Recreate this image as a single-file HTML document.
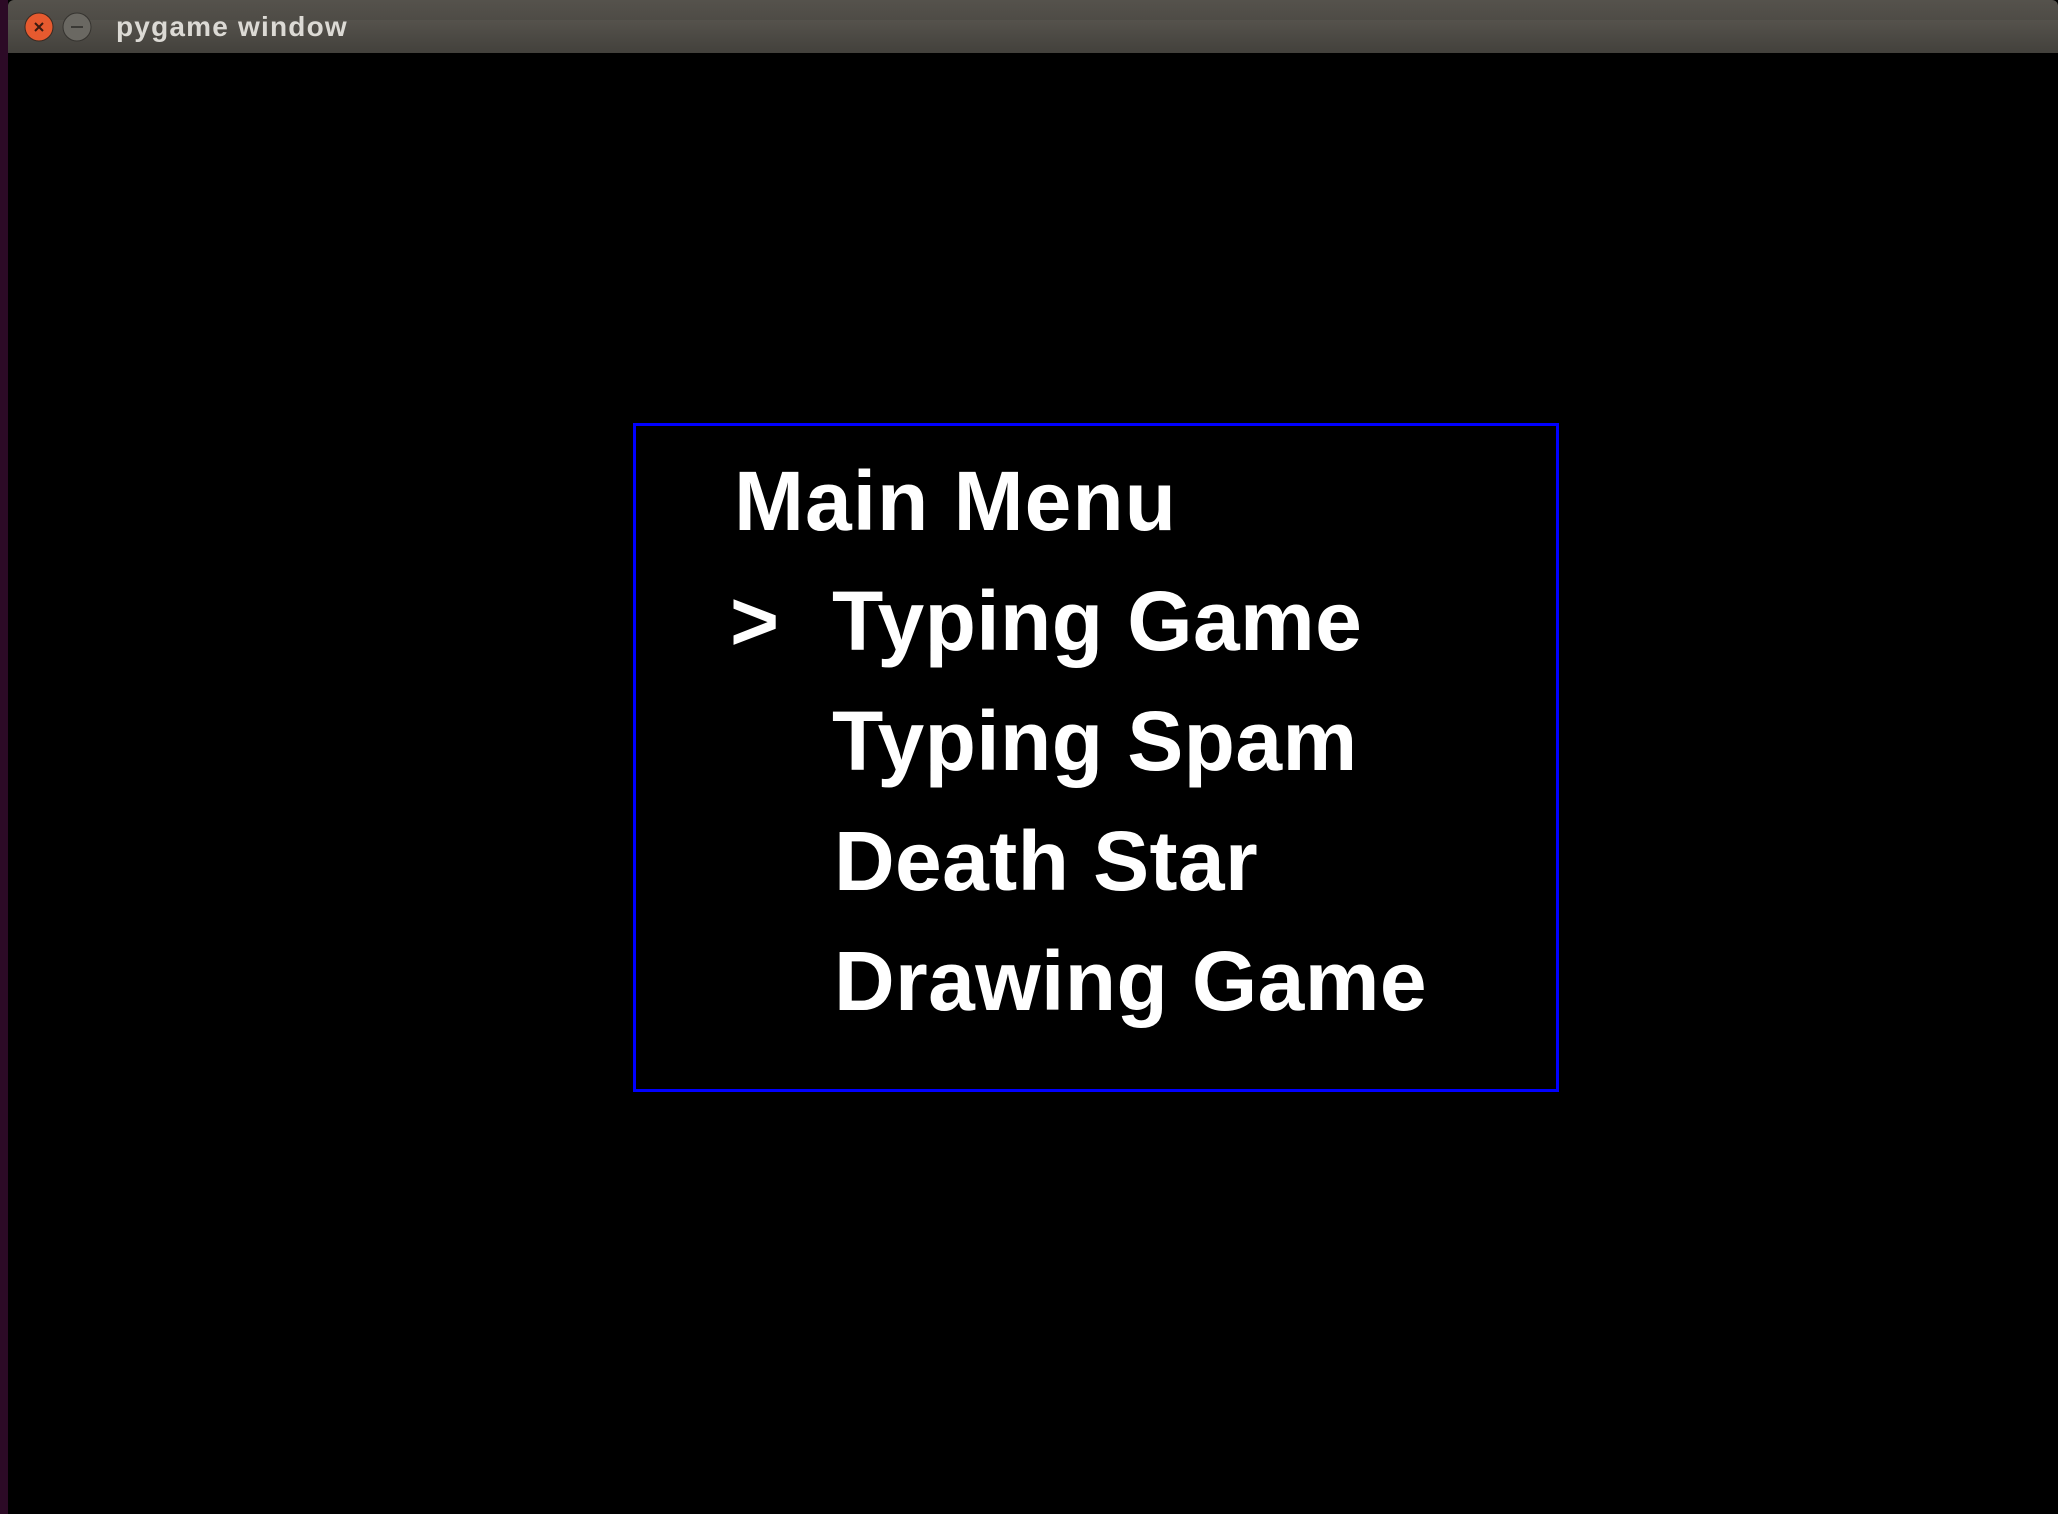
<!DOCTYPE html>
<html><head><meta charset="utf-8"><style>
html,body{margin:0;padding:0;background:#000;}
body{width:2058px;height:1514px;overflow:hidden;position:relative;}
</style></head><body>
<svg width="2058" height="1514" xmlns="http://www.w3.org/2000/svg" style="position:absolute;left:0;top:0">
<rect x="0" y="0" width="2058" height="1514" fill="#000"/>
<rect x="0" y="0" width="8" height="1514" fill="#2c0a26"/>
<defs><linearGradient id="tb" x1="0" y1="0" x2="0" y2="1"><stop offset="0" stop-color="#55524c"/><stop offset="1" stop-color="#43413c"/></linearGradient></defs>
<rect x="8" y="0" width="2050" height="53" rx="6" fill="url(#tb)"/>
<rect x="8" y="20" width="2050" height="33" fill="url(#tb)"/>
<circle cx="39" cy="27" r="14" fill="#e65a2f" stroke="#3a2a22" stroke-width="1"/>
<path d="M35 23 L43 31 M43 23 L35 31" stroke="#3b1a10" stroke-width="2"/>
<circle cx="77" cy="27" r="14" fill="#6a6862" stroke="#35332f" stroke-width="1"/>
<path d="M71 27 L83 27" stroke="#3a3935" stroke-width="2"/>
<text x="116" y="36" font-family="Liberation Sans, sans-serif" font-weight="bold" font-size="28" letter-spacing="1.2" fill="#dcdad5">pygame window</text>
<rect x="634.5" y="424.5" width="923" height="666" fill="none" stroke="#0000ff" stroke-width="3"/>
<g font-family="Liberation Sans, sans-serif" font-weight="bold" font-size="84" letter-spacing="0.4" fill="#fff">
<text x="734" y="530" letter-spacing="1">Main Menu</text>
<text x="730" y="650">&gt;</text>
<text x="832" y="650">Typing Game</text>
<text x="832" y="770">Typing Spam</text>
<text x="834" y="890">Death Star</text>
<text x="834" y="1010">Drawing Game</text>
</g>
</svg>
</body></html>
